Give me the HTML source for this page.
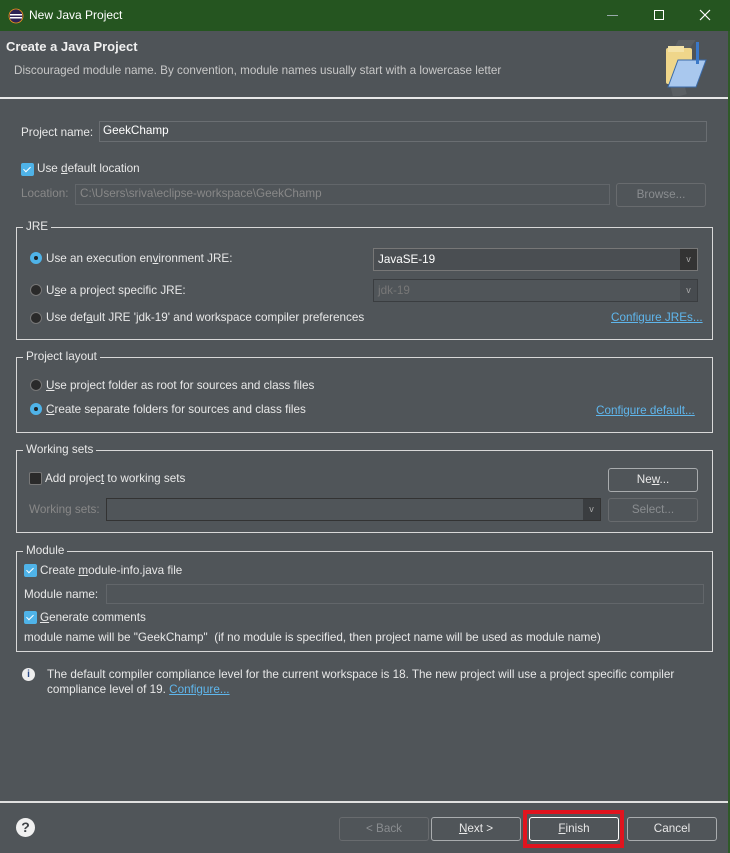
<!DOCTYPE html>
<html><head><style>
*{margin:0;padding:0;box-sizing:border-box}
body{width:730px;height:853px;background:#505559;font-family:"Liberation Sans",sans-serif;font-size:11.7px;color:#e8e8e8;position:relative;overflow:hidden}
.a{position:absolute;white-space:nowrap}
.title{left:0;top:0;width:730px;height:31px;background:#255520}
.grp{position:absolute;border:1px solid #d8d8d8}
.lg{position:absolute;top:-8px;left:6px;background:#505559;padding:0 3px;line-height:14px}
.in{position:absolute;border:1px solid #6a6e72;background:#505559}
.btn{position:absolute;border:1px solid #a9acae;border-radius:3px;text-align:center;line-height:22px;height:24px;background:#505559}
.dis{color:#8a8d90;border-color:#686b6e}
.rad{position:absolute;width:12px;height:12px;border-radius:50%;background:#2a2a2a;border:1px solid #777}
.rad.on{background:#4fb3e8;border-color:#4fb3e8}
.rad.on::after{content:"";position:absolute;left:3px;top:3px;width:4px;height:4px;border-radius:50%;background:#222}
.cb{position:absolute;width:13px;height:13px;border-radius:2px;background:#4fb3e8}
.cb::after{content:"";position:absolute;left:4px;top:2px;width:3px;height:6px;border:solid #fff;border-width:0 1px 1px 0;transform:rotate(45deg)}
.cb.off{background:#2a2a2a;border:1px solid #777}
.cb.off::after{display:none}
.lnk{color:#5fb6ec;text-decoration:underline}
.combo{position:absolute;border:1px solid #777;background:#4a4e52}
.combo .ar{position:absolute;right:0;top:0;bottom:0;width:17px;background:#333;color:#aaa;font-size:9px;text-align:center}
u{text-decoration:underline}
</style></head><body>
<div class="a title"></div>
<svg class="a" style="left:8px;top:8px" width="16" height="16"><circle cx="8" cy="8" r="7" fill="#2c2255"/><rect x="2" y="6" width="12" height="1.5" fill="#fff"/><rect x="2" y="9" width="12" height="1.5" fill="#fff"/><circle cx="8" cy="8" r="7" fill="none" stroke="#f7941e" stroke-width="0.8"/></svg>
<div class="a" style="left:29px;top:8px;color:#fff;font-size:12px">New Java Project</div>
<div class="a" style="left:607px;top:15px;width:11px;height:1px;background:#9aa"></div>
<div class="a" style="left:654px;top:10px;width:10px;height:10px;border:1px solid #fff"></div>
<svg class="a" style="left:699px;top:9px" width="12" height="12"><path d="M1 1L11 11M11 1L1 11" stroke="#fff" stroke-width="1.2"/></svg>
<div class="a" style="left:0;top:31px;width:730px;height:66px;background:#4f5458"></div>
<div class="a" style="left:6px;top:39px;font-size:13px;font-weight:bold;color:#f0f0f0">Create a Java Project</div>
<div class="a" style="left:14px;top:64px;color:#c8c8c8">Discouraged module name. By convention, module names usually start with a lowercase letter</div>
<svg class="a" style="left:660px;top:40px" width="68" height="56"><path d="M30 -4 Q10 20 20 56" stroke="#666a6e" stroke-width="14" fill="none" opacity="0.5"/><rect x="6" y="8" width="26" height="36" rx="2" fill="#efd68a"/><rect x="8" y="6" width="16" height="6" fill="#f4e3a8"/><path d="M8 47 L18 20 L46 20 L36 47 Z" fill="#a9c8ee" stroke="#3a6aa8"/><rect x="36" y="2" width="3" height="22" fill="#3a78c8"/></svg>
<div class="a" style="left:0;top:97px;width:728px;height:2px;background:#e8e8e8"></div>
<div class="a" style="left:728px;top:31px;width:2px;height:822px;background:#2f5a28"></div>

<div class="a" style="left:21px;top:126px">Project name:</div>
<div class="in" style="left:99px;top:121px;width:608px;height:21px"></div>
<div class="a" style="left:103px;top:124px;color:#fff">GeekChamp</div>
<div class="cb" style="left:21px;top:163px"></div>
<div class="a" style="left:37px;top:162px">Use <u>d</u>efault location</div>
<div class="a" style="left:21px;top:187px;color:#888">Location:</div>
<div class="in" style="left:75px;top:184px;width:535px;height:21px;border-color:#62666a"></div>
<div class="a" style="left:80px;top:187px;color:#888">C:\Users\sriva\eclipse-workspace\GeekChamp</div>
<div class="btn dis" style="left:616px;top:183px;width:90px">Browse...</div>

<div class="grp" style="left:16px;top:227px;width:697px;height:113px"><div class="lg">JRE</div></div>
<div class="rad on" style="left:30px;top:252px"></div>
<div class="a" style="left:46px;top:252px">Use an execution en<u>v</u>ironment JRE:</div>
<div class="combo" style="left:373px;top:248px;width:325px;height:23px"><span class="a" style="left:4px;top:4px;color:#fff">JavaSE-19</span><div class="ar" style="line-height:21px">v</div></div>
<div class="rad" style="left:30px;top:284px"></div>
<div class="a" style="left:46px;top:284px">U<u>s</u>e a project specific JRE:</div>
<div class="combo" style="left:373px;top:279px;width:325px;height:23px;border-color:#3a3d40;background:#505559"><span class="a" style="left:4px;top:4px;color:#777">jdk-19</span><div class="ar" style="line-height:21px;background:#474b4f">v</div></div>
<div class="rad" style="left:30px;top:312px"></div>
<div class="a" style="left:46px;top:311px">Use def<u>a</u>ult JRE 'jdk-19' and workspace compiler preferences</div>
<div class="a lnk" style="left:611px;top:311px">Configure JREs...</div>

<div class="grp" style="left:16px;top:357px;width:697px;height:76px"><div class="lg">Project layout</div></div>
<div class="rad" style="left:30px;top:379px"></div>
<div class="a" style="left:46px;top:379px"><u>U</u>se project folder as root for sources and class files</div>
<div class="rad on" style="left:30px;top:403px"></div>
<div class="a" style="left:46px;top:403px"><u>C</u>reate separate folders for sources and class files</div>
<div class="a lnk" style="left:596px;top:404px">Configure default...</div>

<div class="grp" style="left:16px;top:450px;width:697px;height:83px"><div class="lg">Working sets</div></div>
<div class="cb off" style="left:29px;top:472px"></div>
<div class="a" style="left:45px;top:472px">Add projec<u>t</u> to working sets</div>
<div class="btn" style="left:608px;top:468px;width:90px">Ne<u>w</u>...</div>
<div class="a" style="left:29px;top:503px;color:#888">Working sets:</div>
<div class="combo" style="left:106px;top:498px;width:495px;height:23px;border-color:#333;background:#505559"><div class="ar" style="line-height:21px;background:#3a3d40">v</div></div>
<div class="btn dis" style="left:608px;top:498px;width:90px">Select...</div>

<div class="grp" style="left:16px;top:551px;width:697px;height:101px"><div class="lg">Module</div></div>
<div class="cb" style="left:24px;top:564px"></div>
<div class="a" style="left:40px;top:564px">Create <u>m</u>odule-info.java file</div>
<div class="a" style="left:24px;top:588px">Module name:</div>
<div class="in" style="left:106px;top:584px;width:598px;height:20px;border-color:#62666a"></div>
<div class="cb" style="left:24px;top:611px"></div>
<div class="a" style="left:40px;top:611px"><u>G</u>enerate comments</div>
<div class="a" style="left:24px;top:631px">module name will be "GeekChamp"&nbsp; (if no module is specified, then project name will be used as module name)</div>

<div class="a" style="left:22px;top:668px;width:13px;height:13px;border-radius:50%;background:#eee;color:#2a4a8a;font-size:10px;font-weight:bold;text-align:center;line-height:13px">i</div>
<div class="a" style="left:47px;top:668px">The default compiler compliance level for the current workspace is 18. The new project will use a project specific compiler</div>
<div class="a" style="left:47px;top:683px">compliance level of 19. <span class="lnk">Configure...</span></div>

<div class="a" style="left:0;top:801px;width:728px;height:2px;background:#e0e0e0"></div>
<div class="a" style="left:16px;top:818px;width:19px;height:19px;border-radius:50%;background:#f0f0f0;color:#404448;font-weight:bold;font-size:14px;text-align:center;line-height:19px">?</div>
<div class="btn dis" style="left:339px;top:817px;width:90px">&lt; Back</div>
<div class="btn" style="left:431px;top:817px;width:90px"><u>N</u>ext &gt;</div>
<div class="a" style="left:523px;top:810px;width:101px;height:38px;border:4px solid #e0141e"></div>
<div class="btn" style="left:529px;top:817px;width:90px;border-color:#fff"><u>F</u>inish</div>
<div class="btn" style="left:627px;top:817px;width:90px">Cancel</div>
</body></html>
